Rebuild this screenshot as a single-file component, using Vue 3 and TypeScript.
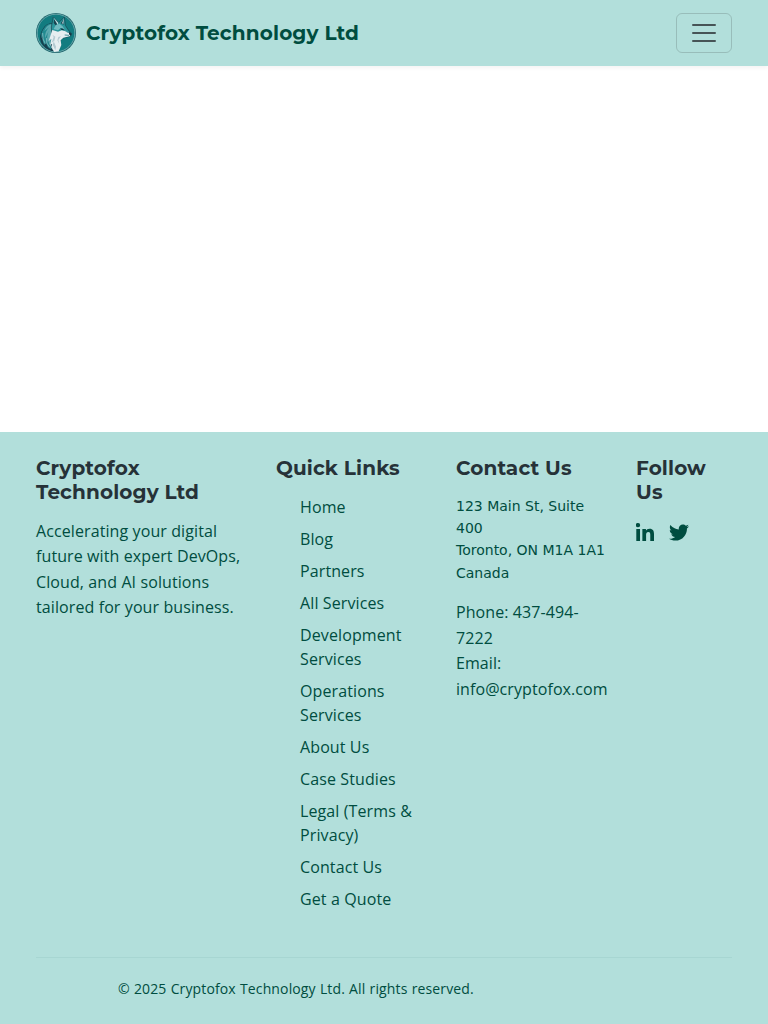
<script setup lang="ts">
const links: string[] = [
  'Home', 'Blog', 'Partners', 'All Services', 'Development Services', 'Operations Services',
  'About Us', 'Case Studies', 'Legal (Terms & Privacy)', 'Contact Us', 'Get a Quote',
]
</script>

<template>
  <div class="page">
    <header class="navbar">
      <a class="brand">
        <svg class="logo" viewBox="0 0 120 120" aria-hidden="true">
          <circle cx="60" cy="60" r="60" fill="#1d646b" />
          <circle cx="60" cy="60" r="56.5" fill="#127c80" stroke="#8fc0c2" stroke-width="2" />
          <path d="M50 30Q28 31 20 49 8 68 15 88q9 19 32 26l21-1 8-34-3-18Z" fill="#173f4d" />
          <path d="M48 32Q31 31 24 46 14 58 16 76l5-8q-4 18 5 28l4-8q1 14 15 21l-1-15 13-29Z" fill="#238a90" />
          <path d="M45 34q-15 5-20 20l15-12q-14 13-13 34l11-22q-8 19-2 36l10-25 6-22Z" fill="#5daab0" />
          <path d="m52 12 16 17 17-17 3 25 9 14 10 11-3 7-18 5-19 3-19-11-2-24Z" fill="#2a969b" stroke="#173e4a" stroke-width="2" />
          <path d="m55 18 9 12-4 8-7-8Zm28 0-9 13 9 4Z" fill="#194450" />
          <path d="m52 13 15 16-2 7Zm32 2-2 18-4-2Z" fill="#b7d8dc" />
          <path d="m59 37 11-5 9 7 7 10-12-4-8 7-13-4Z" fill="#70bbc0" />
          <path d="m49 51 17 5 11-4 12 3 16 8-4 7-19 4-8 8 2 14-8 19-13 2-9-13 2-12-6 5 4-19-8 6Z" fill="#e6eef0" />
          <path d="m49 65 9 6-4 16 6 14-2 11-8-17 4-12-7 6 6-17Zm26 5-8 11 3 12-6-11 3-10Z" fill="#b4cbd2" />
          <path d="m73 46 8 1 4 5-9-2Z" fill="#102f3b" />
          <path d="m99 57 8 5-3 6-5-4Z" fill="#123440" />
          <path d="M86 51q5 6 13 8M86 66l13 1" fill="none" stroke="#4b929b" stroke-width="3" />
          <path d="M20 60q-2 20 8 32m3-17q-2 16 10 28m1-26-1 16 9 14" fill="none" stroke="#a1ccd2" stroke-width="2" />
        </svg>
        <span>Cryptofox Technology Ltd</span>
      </a>
      <button class="toggler" aria-label="Toggle navigation">
        <svg width="30" height="30" viewBox="0 0 30 30">
          <path d="M4 7h22M4 15h22M4 23h22" fill="none" stroke="#212529" stroke-opacity=".75" stroke-width="2" stroke-linecap="round" />
        </svg>
      </button>
    </header>
    <footer class="footer">
      <div class="columns">
        <section class="about">
          <h5>Cryptofox Technology Ltd</h5>
          <p>Accelerating your digital future with expert DevOps, Cloud, and AI solutions tailored for your business.</p>
        </section>
        <section>
          <h5>Quick Links</h5>
          <ul><li v-for="link in links" :key="link"><a>{{ link }}</a></li></ul>
        </section>
        <section>
          <h5>Contact Us</h5>
          <address>123 Main St, Suite 400<br>Toronto, ON M1A 1A1<br>Canada</address>
          <p class="contact">Phone: 437-494-7222<br>Email: info@cryptofox.com</p>
        </section>
        <section>
          <h5>Follow Us</h5>
          <div class="social">
            <svg class="linkedin" viewBox="0 0 448 448" aria-label="LinkedIn">
              <path d="M100.3 448H7.4V148.9h92.9ZM53.8 108.1A54.2 54.2 0 1 1 53.8 0a54.2 54.2 0 0 1 0 108.1ZM448 448h-92.7V302.4c0-34.7-.7-79.2-48.3-79.2-48.3 0-55.7 37.7-55.7 76.7V448h-92.8V148.9h89.1v40.8h1.3c12.4-23.5 42.7-48.3 87.9-48.3 94 0 111.3 61.9 111.3 142.3V448Z" />
            </svg>
            <svg class="twitter" viewBox="0 48 512 416" aria-label="Twitter">
              <path d="M459.4 151.7c.3 4.5.3 9.1.3 13.6 0 138.7-105.6 298.6-298.6 298.6-59.5 0-114.7-17.2-161.1-47.1 8.4 1 16.6 1.3 25.3 1.3 49.1 0 94.2-16.6 130.3-44.8-46.1-1-84.8-31.2-98.1-72.8 6.5 1 13 1.6 19.8 1.6 9.4 0 18.8-1.3 27.6-3.6-48.1-9.7-84.1-52-84.1-103v-1.3c14 7.8 30.2 12.7 47.4 13.3-28.3-18.8-46.8-51-46.8-87.4 0-19.5 5.2-37.4 14.3-53 51.7 63.7 129.3 105.3 216.4 109.8-1.6-7.8-2.6-15.9-2.6-24 0-57.8 46.8-104.9 104.9-104.9 30.2 0 57.5 12.7 76.7 33.1 23.7-4.5 46.5-13.3 66.6-25.3-7.8 24.4-24.4 44.8-46.1 57.8 21.1-2.3 41.6-8.1 60.4-16.2-14.3 20.8-32.2 39.3-52.6 54.3Z" />
            </svg>
          </div>
        </section>
      </div>
      <div class="copyright">© 2025 Cryptofox Technology Ltd. All rights reserved.</div>
    </footer>
  </div>
</template>

<style>
body { margin: 0; background: #fff; }
</style>

<style scoped>
* { box-sizing: border-box; }
.page { min-height: 1024px; display: flex; flex-direction: column; justify-content: space-between; font: 16px/1.6 "Open Sans", sans-serif; color: #004d40; }
.navbar { height: 66px; padding: 0 36px; display: flex; align-items: center; justify-content: space-between; background: #b2dfdb; box-shadow: 0 2px 4px rgba(0, 0, 0, .05); }
.brand { display: flex; align-items: center; gap: 10px; font: 700 20px/30px Montserrat, "Open Sans", sans-serif; letter-spacing: .14px; white-space: nowrap; }
.logo { width: 40px; height: 40px; display: block; }
.toggler { width: 56px; height: 40px; padding: 0 12px; border: 1px solid rgba(33, 37, 41, .18); border-radius: 6px; background: transparent; display: flex; align-items: center; justify-content: center; }
.toggler svg { display: block; flex: none; }
.footer { height: 592px; padding: 24px 36px 0; background: #b2dfdb; }
.columns { display: grid; grid-template-columns: 216px 156px 156px 96px; column-gap: 24px; height: 501px; }
h5 { margin: 0 0 14.6px; color: #263238; font: 700 20px/24px Montserrat, "Open Sans", sans-serif; letter-spacing: .12px; }
p { margin: 0; letter-spacing: .1px; }
.contact { letter-spacing: .08px; }
ul { margin: 0; padding: .4px 0 0 24px; list-style: none; letter-spacing: .11px; }
li { margin-bottom: 8px; line-height: 24px; }
address { margin: 0 0 16px; font: 14px/22.4px "DejaVu Sans", sans-serif; }
.social { display: flex; align-items: flex-end; padding-top: 4.4px; fill: #004d40; }
.linkedin { width: 18px; height: 18px; }
.twitter { width: 20px; height: 17px; margin-left: 15px; }
.copyright { border-top: 1px solid rgba(0, 77, 64, .06); padding: 20px 82px 0; font-size: 14px; line-height: 22.4px; letter-spacing: .13px; word-spacing: .4px; }
</style>
